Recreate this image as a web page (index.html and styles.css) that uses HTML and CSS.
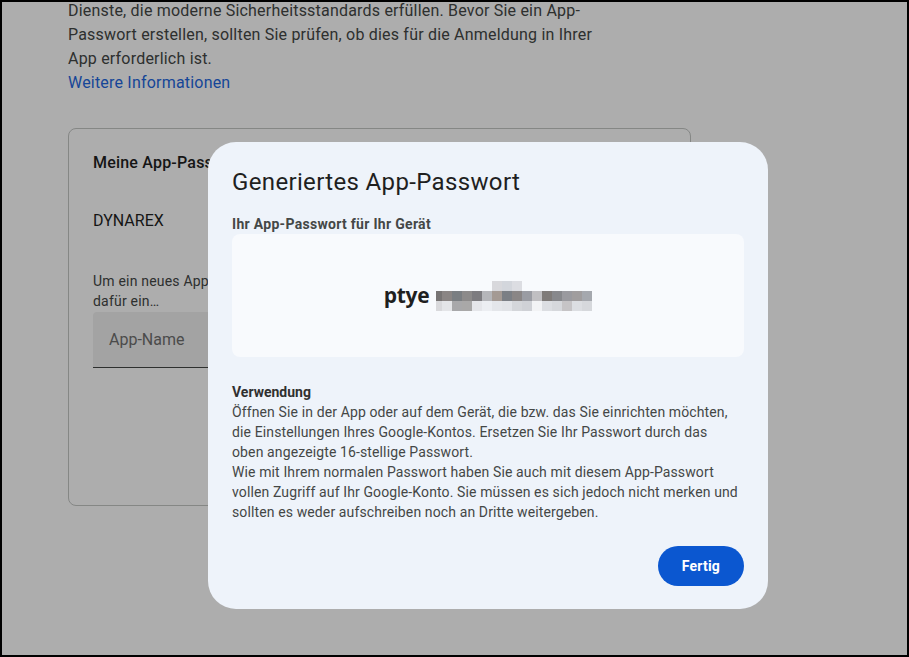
FILE: index.html
```html
<!DOCTYPE html>
<html lang="de">
<head>
<meta charset="utf-8">
<title>App-Passwörter</title>
<link rel="stylesheet" href="styles.css">
</head>
<body>
<main class="page">
  <p class="intro">Dienste, die moderne Sicherheitsstandards erfüllen. Bevor Sie ein App-<br>Passwort erstellen, sollten Sie prüfen, ob dies für die Anmeldung in Ihrer<br>App erforderlich ist.</p>
  <a class="more" href="#">Weitere Informationen</a>

  <section class="card">
    <h3 class="card-title">Meine App-Passwörter</h3>
    <div class="app-name">DYNAREX</div>
    <p class="hint">Um ein neues App-Passwort zu erstellen, geben Sie unten einen Namen<br>dafür ein…</p>
    <div class="field"><span class="placeholder">App-Name</span></div>
    <div class="card-actions"><button class="btn-text" type="button">Erstellen</button></div>
  </section>
</main>

<div class="scrim"></div>

<div class="dialog" role="dialog" aria-labelledby="dlg-title">
  <h2 id="dlg-title" class="dialog-title">Generiertes App-Passwort</h2>
  <div class="label">Ihr App-Passwort für Ihr Gerät</div>
  <div class="pw-box">
    <span class="pw-text">ptye</span>
    <span class="pixels" aria-hidden="true">
      <i></i><i></i><i></i><i></i><i></i><i></i><i style="background:#d8d8dc"></i><i style="background:#d3d6dc"></i><i style="background:#dcdde2"></i><i></i><i></i><i></i><i></i><i></i><i></i><i></i>
      <i style="background:#777474"></i><i style="background:#8a8584"></i><i style="background:#7a7e82"></i><i style="background:#8c8a8a"></i><i style="background:#7d7c80"></i><i style="background:#b5b6ba"></i><i style="background:#a49a94"></i><i style="background:#7b7f85"></i><i style="background:#8a8686"></i><i style="background:#9a9ca3"></i><i style="background:#c0bfc2"></i><i style="background:#7f7b79"></i><i style="background:#87888c"></i><i style="background:#9a9a9f"></i><i style="background:#a09d9e"></i><i style="background:#a5a8ae"></i>
      <i style="background:#d9d9dc"></i><i style="background:#e4e5e8"></i><i style="background:#a8a8aa"></i><i style="background:#a9a8a8"></i><i style="background:#e5e6ea"></i><i style="background:#eceef2"></i><i style="background:#e4e6ea"></i><i style="background:#e1e3e7"></i><i style="background:#d4d6da"></i><i style="background:#cfd1d6"></i><i style="background:#f2f3f5"></i><i style="background:#dcdee2"></i><i style="background:#d6d8dc"></i><i style="background:#c6c4c6"></i><i style="background:#dcdee2"></i><i style="background:#d6d8dc"></i>
    </span>
  </div>
  <div class="usage">
    <strong class="usage-title">Verwendung</strong>
    <p class="usage-text">Öffnen Sie in der App oder auf dem Gerät, die bzw. das Sie einrichten möchten,<br>die Einstellungen Ihres Google-Kontos. Ersetzen Sie Ihr Passwort durch das<br>oben angezeigte 16-stellige Passwort.<br>Wie mit Ihrem normalen Passwort haben Sie auch mit diesem App-Passwort<br>vollen Zugriff auf Ihr Google-Konto. Sie müssen es sich jedoch nicht merken und<br>sollten es weder aufschreiben noch an Dritte weitergeben.</p>
  </div>
  <div class="actions">
    <button class="btn-primary" type="button">Fertig</button>
  </div>
</div>
</body>
</html>
```
FILE: styles.css
```css
html, body {
  margin: 0;
  height: 100%;
}

body {
  font-family: Roboto, "Noto Sans", "Liberation Sans", sans-serif;
  background: #ffffff;
  color: #1f1f1f;
  overflow: hidden;
}

/* black frame of the captured window */
body::after {
  content: "";
  position: fixed;
  inset: 0;
  border: 2px solid #000;
  pointer-events: none;
  z-index: 20;
}

.page {
  margin-top: -1px;
  padding-left: 68px;
  width: 623px;
}

.intro {
  margin: 0;
  font-size: 16px;
  line-height: 24px;
  letter-spacing: 0.2px;
  color: #444746;
}

.more {
  display: block;
  font-size: 16px;
  line-height: 24px;
  letter-spacing: 0.2px;
  color: #1f68e0;
  text-decoration: none;
}

.card {
  margin-top: 33px;
  height: 378px;
  box-sizing: border-box;
  border: 1px solid #c4c7c5;
  border-radius: 8px;
  padding: 24px 24px 0;
  display: flex;
  flex-direction: column;
}

.card-title {
  margin: 0;
  font-size: 16px;
  line-height: 20px;
  font-weight: 500;
  letter-spacing: 0.2px;
  color: #1f1f1f;
}

.app-name {
  margin-top: 36px;
  font-size: 16px;
  line-height: 24px;
  color: #1f1f1f;
}

.hint {
  margin: 38px 0 0;
  font-size: 14px;
  line-height: 20px;
  letter-spacing: 0.2px;
  color: #444746;
}

.field {
  margin-top: 1px;
  height: 55px;
  border-bottom: 1px solid #444746;
  background: #f1f1f1;
  border-radius: 4px 4px 0 0;
  padding-left: 16px;
  display: flex;
  align-items: center;
}

.placeholder {
  font-size: 16px;
  color: #6f6f6f;
}

.card-actions {
  margin-top: 24px;
  display: flex;
  justify-content: flex-end;
}

.btn-text {
  border: 0;
  background: transparent;
  color: #0b57d0;
  font: 500 14px Roboto, sans-serif;
  height: 40px;
  padding: 0 12px;
}

.scrim {
  position: fixed;
  inset: 0;
  background: rgba(0, 0, 0, 0.32);
  z-index: 5;
}

.dialog {
  position: fixed;
  left: 208px;
  top: 142px;
  width: 560px;
  box-sizing: border-box;
  padding: 24px 24px 23px;
  background: #eef3fa;
  border-radius: 28px;
  z-index: 10;
}

.dialog-title {
  margin: 0;
  font-size: 24px;
  line-height: 32px;
  font-weight: 400;
  letter-spacing: 0.35px;
  color: #1f1f1f;
}

.label {
  margin-top: 16px;
  font-size: 14px;
  line-height: 20px;
  font-weight: 700;
  letter-spacing: 0.3px;
  color: #444746;
}

.pw-box {
  height: 123px;
  background: #f8fafd;
  border-radius: 8px;
  display: flex;
  align-items: center;
  justify-content: center;
  gap: 7px;
}

.pw-text {
  font-family: "Open Sans", Roboto, sans-serif;
  font-size: 21px;
  line-height: 28px;
  font-weight: 700;
  letter-spacing: -0.3px;
  color: #1f1f1f;
  margin-top: -2px;
}

.pixels {
  display: grid;
  grid-template-columns: 6px repeat(15, 10px);
  grid-template-rows: repeat(3, 10px);
}

.pixels i {
  display: block;
}

.usage {
  margin-top: 25px;
  font-size: 14px;
  line-height: 20px;
  color: #444746;
}

.usage-title {
  display: block;
  font-weight: 700;
  color: #303030;
}

.usage-text {
  margin: 0;
  letter-spacing: 0.12px;
  white-space: nowrap;
}

.actions {
  margin-top: 24px;
  display: flex;
  justify-content: flex-end;
}

.btn-primary {
  height: 40px;
  padding: 0 24px;
  border: 0;
  border-radius: 20px;
  background: #0b57d0;
  color: #ffffff;
  font-family: Roboto, sans-serif;
  font-size: 14px;
  font-weight: 700;
  letter-spacing: 0.2px;
}
```
